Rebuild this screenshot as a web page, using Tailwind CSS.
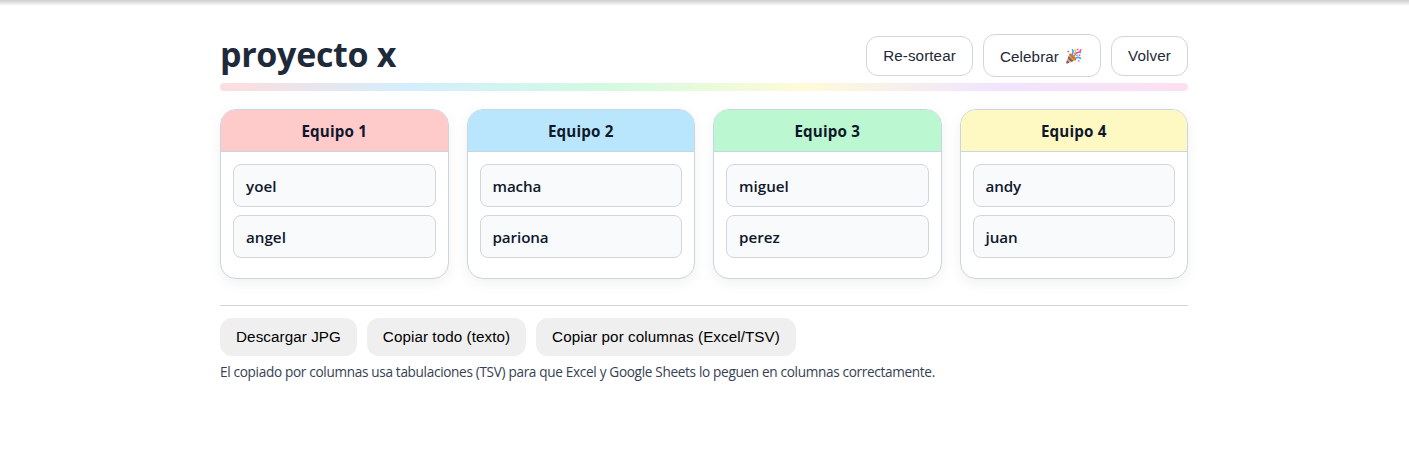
<!DOCTYPE html>
<html lang="es">
<head>
<meta charset="utf-8">
<title>proyecto x</title>
<script src="https://cdn.jsdelivr.net/npm/@tailwindcss/browser@4"></script>
</head>
<body class="h-[475px] overflow-hidden bg-white font-['Segoe_UI','Open_Sans',sans-serif] text-slate-900">
<div class="h-[6px] bg-linear-to-b from-[#cecece] to-white"></div>
<div class="pr-px">
<main class="mx-auto w-[968px] pt-[28px]">
  <header class="flex h-[43px] items-center justify-between">
    <h1 class="pb-[3px] text-[34px] leading-[40px] font-bold tracking-[-0.3px] whitespace-nowrap text-gray-800">proyecto x</h1>
    <div class="flex items-center gap-[10px] font-['Liberation_Sans',sans-serif] text-[15.2px] text-gray-800">
      <button class="h-10 w-[107px] rounded-xl border border-gray-300 bg-white pt-px tracking-[0.1px] whitespace-nowrap">Re-sortear</button>
      <button class="flex h-[43px] w-[118px] items-center justify-center gap-[7px] rounded-xl border border-gray-300 bg-white pt-px pr-[2px] tracking-[0.1px] whitespace-nowrap"><span class="pt-[2px]">Celebrar</span>
        <svg class="h-4 w-4" viewBox="0 0 16 16" fill="none" aria-hidden="true">
          <path d="M3.5 5.5 10.2 12 1 15.5Q0 15.5.4 14Z" fill="#f0a03a"/>
          <path d="M2.5 8.2 7.4 13.1 5.6 13.8 1.8 10.2ZM1.1 12.3 3.3 14.6 1 15.5Q0 15.5.4 14Z" fill="#6258a8"/>
          <ellipse cx="6.9" cy="8.8" rx="1.5" ry="4.4" transform="rotate(-45 6.9 8.8)" fill="#c97835"/>
          <path d="M6 7Q8 4 6.3 1.2M9.7 10Q12 8.5 15 10.7" stroke="#35aef0" stroke-width="1.6"/>
          <path d="M8.2 8Q9.5 4.5 12 4.5T14.8 1.2" stroke="#f04c9b" stroke-width="1.6"/>
          <path d="M8 7Q10 5 9 1" stroke="#f8b936" stroke-width="1.2"/>
          <path d="M1.5 2.7h1.6v1.6H1.5zM11 .8h1.4v1.4H11zM12.8 6.5h1.5v1.4h-1.5zM12 12.2h1.5v1.4H12z" fill="#f04c9b"/>
          <path d="M10.3 6.5h1.4v1.4h-1.4zM13.7 4h1.3v1.3h-1.3z" fill="#35aef0"/>
        </svg>
      </button>
      <button class="h-10 w-[77px] rounded-xl border border-gray-300 bg-white pt-px tracking-[0.1px] whitespace-nowrap">Volver</button>
    </div>
  </header>
  <div class="mt-[6px] h-2 rounded-full bg-[linear-gradient(90deg,#fecaca,#bae6fd,#bbf7d0,#fef9c3,#e9d5ff,#fbcfe8)] opacity-65"></div>

  <section class="mt-[18px] grid grid-cols-4 gap-[18px] text-[15.2px] whitespace-nowrap">
    <article class="h-[170px] overflow-hidden rounded-2xl border border-slate-300 bg-white shadow-[0_4px_14px_rgba(0,0,0,0.06)]">
      <h2 class="h-[42px] border-b border-slate-300 bg-[#fecaca] text-center leading-[43px] font-bold tracking-[0.15px]">Equipo 1</h2>
      <ul class="flex flex-col gap-2 p-3 font-semibold">
        <li class="h-[43px] rounded-lg border border-gray-300 bg-slate-50 px-3 leading-[43px]">yoel</li>
        <li class="h-[43px] rounded-lg border border-gray-300 bg-slate-50 px-3 leading-[43px]">angel</li>
      </ul>
    </article>
    <article class="h-[170px] overflow-hidden rounded-2xl border border-slate-300 bg-white shadow-[0_4px_14px_rgba(0,0,0,0.06)]">
      <h2 class="h-[42px] border-b border-slate-300 bg-[#bae6fd] text-center leading-[43px] font-bold tracking-[0.15px]">Equipo 2</h2>
      <ul class="flex flex-col gap-2 p-3 font-semibold tracking-[-0.1px]">
        <li class="h-[43px] rounded-lg border border-gray-300 bg-slate-50 px-3 leading-[43px]">macha</li>
        <li class="h-[43px] rounded-lg border border-gray-300 bg-slate-50 px-3 leading-[43px]">pariona</li>
      </ul>
    </article>
    <article class="h-[170px] overflow-hidden rounded-2xl border border-slate-300 bg-white shadow-[0_4px_14px_rgba(0,0,0,0.06)]">
      <h2 class="h-[42px] border-b border-slate-300 bg-[#bbf7d0] text-center leading-[43px] font-bold tracking-[0.15px]">Equipo 3</h2>
      <ul class="flex flex-col gap-2 p-3 font-semibold">
        <li class="h-[43px] rounded-lg border border-gray-300 bg-slate-50 px-3 leading-[43px]">miguel</li>
        <li class="h-[43px] rounded-lg border border-gray-300 bg-slate-50 px-3 leading-[43px]">perez</li>
      </ul>
    </article>
    <article class="h-[170px] overflow-hidden rounded-2xl border border-slate-300 bg-white shadow-[0_4px_14px_rgba(0,0,0,0.06)]">
      <h2 class="h-[42px] border-b border-slate-300 bg-[#fef9c3] text-center leading-[43px] font-bold tracking-[0.15px]">Equipo 4</h2>
      <ul class="flex flex-col gap-2 p-3 font-semibold tracking-[-0.1px]">
        <li class="h-[43px] rounded-lg border border-gray-300 bg-slate-50 px-3 leading-[43px]">andy</li>
        <li class="h-[43px] rounded-lg border border-gray-300 bg-slate-50 px-3 leading-[43px]">juan</li>
      </ul>
    </article>
  </section>

  <footer class="mt-[26px] border-t border-gray-300 pt-3">
    <div class="flex gap-[10px] font-['Liberation_Sans',sans-serif] text-[15.2px] whitespace-nowrap text-black">
      <button class="h-[38px] w-[137px] rounded-xl bg-[#efefef] tracking-[0.08px]">Descargar JPG</button>
      <button class="h-[38px] w-[159px] rounded-xl bg-[#efefef] tracking-[0.08px]">Copiar todo (texto)</button>
      <button class="h-[38px] w-[260px] rounded-xl bg-[#efefef] tracking-[0.08px]">Copiar por columnas (Excel/TSV)</button>
    </div>
    <p class="mt-[5px] text-[13.6px] leading-[22px] tracking-[-0.325px] whitespace-nowrap text-gray-700">El copiado por columnas usa tabulaciones (TSV) para que Excel y Google Sheets lo peguen en columnas correctamente.</p>
  </footer>
</main>
</div>
</body>
</html>
